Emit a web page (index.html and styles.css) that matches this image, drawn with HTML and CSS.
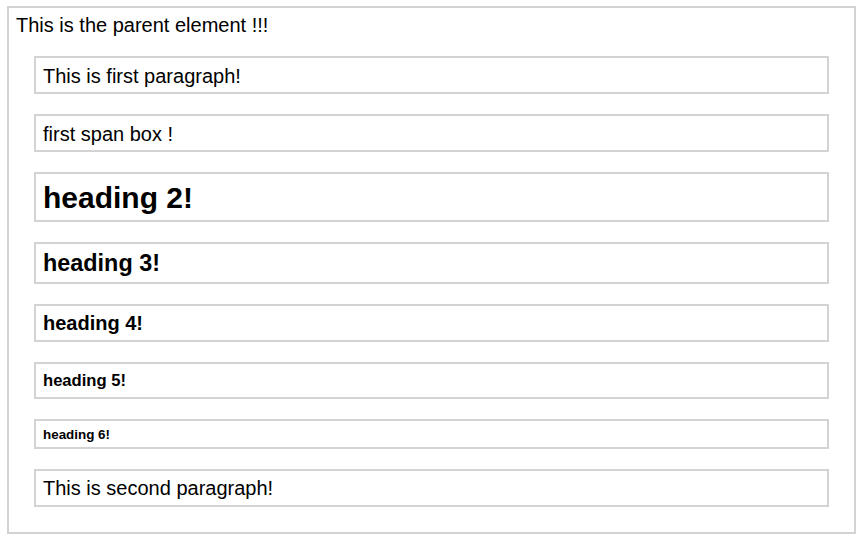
FILE: index.html
```html
<!DOCTYPE html>
<html>
<head>
<meta charset="utf-8">
<link rel="stylesheet" href="styles.css">
</head>
<body>
<div class="parent">
  <div class="parent-text">This is the parent element !!!</div>
  <div class="list">
    <p class="box">This is first paragraph!</p>
    <span class="box">first span box !</span>
    <h2 class="box h2">heading 2!</h2>
    <h3 class="box h3">heading 3!</h3>
    <h4 class="box h4">heading 4!</h4>
    <h5 class="box h5">heading 5!</h5>
    <h6 class="box h6">heading 6!</h6>
    <p class="box">This is second paragraph!</p>
  </div>
</div>
</body>
</html>
```
FILE: styles.css
```css
html, body {
  margin: 0;
  padding: 0;
  background: #ffffff;
}
body {
  font-family: "Liberation Sans", Arial, sans-serif;
  font-size: 20px;
  color: #000000;
}
.parent {
  margin: 6px 0 0 7px;
  width: 849px;
  box-sizing: border-box;
  border: 2px solid #d3d3d3;
  padding: 6px 7px 25px 7px;
}
.parent-text {
  line-height: normal;
}
.list {
  display: flex;
  flex-direction: column;
  gap: 20px;
  margin: 19px 18px 0 18px;
}
.box {
  display: block;
  margin: 0;
  border: 2px solid #d3d3d3;
  padding: 6.5px 7px 4.5px 7px;
  font-weight: normal;
  line-height: normal;
}
.h2 { font-size: 30px; font-weight: bold; padding-top: 6.5px; padding-bottom: 5px; }
.h3 { font-size: 23.4px; font-weight: bold; }
.h4 { font-size: 20px; font-weight: bold; }
.h5 { font-size: 16.6px; font-weight: bold; padding-top: 7px; padding-bottom: 6px; }
.h6 { font-size: 13.4px; font-weight: bold; padding-top: 6px; padding-bottom: 5px; }
```
